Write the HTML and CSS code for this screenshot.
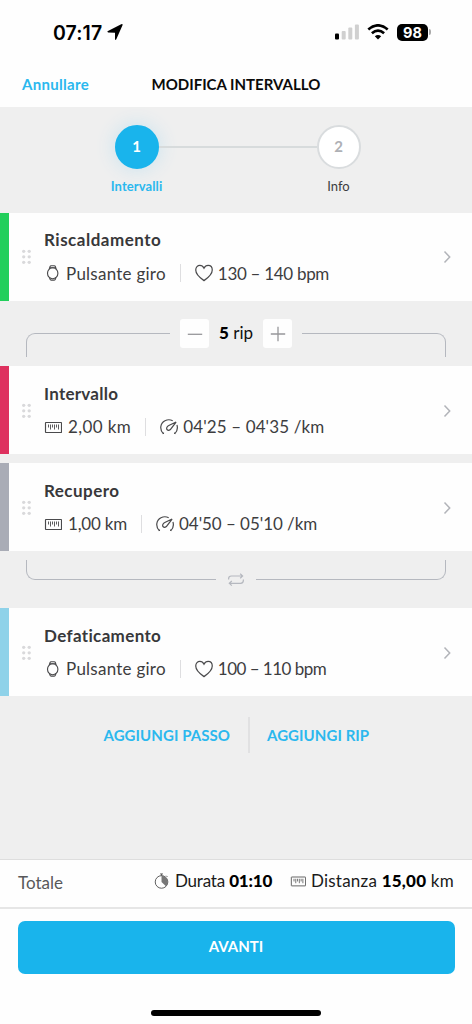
FILE: index.html
```html
<!DOCTYPE html>
<html lang="it">
<head>
<meta charset="utf-8">
<title>Modifica intervallo</title>
<link rel="stylesheet" href="styles.css">
</head>
<body>
<svg class="defs" width="0" height="0">
  <symbol id="watch" viewBox="0 0 18 18"><ellipse cx="8.700" cy="9.200" rx="5.200" ry="5.500"/><path d="M5.300 5 6 2.700Q6.300 1.700 7.200 1.700h3q.9 0 1.200 1l.7 2.300M6 3.700h5.400M5.500 13.600l.5 1.500q.3 1 1.200 1h3q.9 0 1.200-1l.5-1.500"/></symbol>
  <symbol id="heart" viewBox="0 0 17 17"><path d="M8.500 15.700C6 14 .7 10 .7 5.700.7 3 2.500 1.400 4.600 1.400c1.800 0 3.100 1 3.900 2.600.8-1.600 2.100-2.600 3.900-2.600 2.100 0 3.900 1.600 3.900 4.300 0 4.300-5.300 8.300-7.800 10z"/></symbol>
  <symbol id="ruler" viewBox="0 0 18 18"><rect x="1.500" y="4.500" width="16" height="10" rx=".4"/><path class="ticks" d="M4.500 6.500v3M6.500 6.500v5M8.500 6.500v3M10.500 6.500v5M12.500 6.500v3M14.500 6.500v5"/></symbol>
  <symbol id="gauge" viewBox="0 0 17 17"><path d="M3.200 15C-.8 10.800.3 4.800 4.700 2.600 7 1.400 9.700 1.400 12 2.600M16 6.600c.9 3 .3 6-2.100 8.400M15.200 3.800 8.300 7.100c-2 1-2.500 3-1.500 4s3 .5 3.900-1.400zM3.200 15l.1-1.400M13.900 15l-.1-1.400"/></symbol>
  <symbol id="timer" viewBox="0 0 17 17"><circle cx="8" cy="9.500" r="6.700"/><path d="M6.500 1h3M8 1v2M13 2.900l1.300 1.300"/><path class="solid" d="M8 2.800A6.700 6.700 0 0 1 12.700 14.200L8 9.500z"/></symbol>
  <symbol id="chevron" viewBox="0 0 8 14"><path d="M1.500 1.500 6.700 7 1.500 12.500"/></symbol>
  <symbol id="grip" viewBox="0 0 10 16"><circle cx="1.700" cy="2.300" r="1.650"/><circle cx="7.200" cy="2.300" r="1.650"/><circle cx="1.700" cy="7.800" r="1.650"/><circle cx="7.200" cy="7.800" r="1.650"/><circle cx="1.700" cy="13.300" r="1.650"/><circle cx="7.200" cy="13.300" r="1.650"/></symbol>
</svg>
<div class="screen">
  <div class="status">
    <span class="clock">07:17</span>
    <svg class="location" width="16" height="16" viewBox="0 0 16 16"><path d="M15.500 1.200 9.300 15.300q-.8 1.200-1.300-.1V8.800L1.200 8.400q-1.700-.5-.2-1.500L14.200.200q1.900-.5 1.300 1z"/></svg>
    <svg class="signal" width="24" height="16" viewBox="0 0 24 16"><rect x="0" y="9.500" width="4" height="6" rx="1" fill="#000"/><rect x="6.700" y="7" width="4" height="8.500" rx="1"/><rect x="13.300" y="3.500" width="4" height="12" rx="1"/><rect x="19.900" y=".5" width="4" height="15" rx="1"/></svg>
    <svg class="wifi" width="22" height="16" viewBox="0 0 22 16"><path d="M1.300 5.500Q11-2.800 20.700 5.500M4.900 9.300Q11 4 17.100 9.300" fill="none" stroke="#000" stroke-width="2.700"/><path d="M11 15.500 7.800 12.200Q11 9.700 14.200 12.200z"/></svg>
    <span class="battery">98</span><span class="battery-tip"></span>
  </div>
  <header class="nav">
    <a class="cancel">Annullare</a>
    <h1 class="heading">MODIFICA INTERVALLO</h1>
  </header>
  <section class="stepper">
    <div class="step active"><span class="bubble">1</span><span class="step-label">Intervalli</span></div>
    <span class="track"></span>
    <div class="step"><span class="bubble">2</span><span class="step-label">Info</span></div>
  </section>
  <main>
    <article class="card green">
      <svg class="grip"><use href="#grip"/></svg>
      <div class="body">
        <h2 class="title t-warm">Riscaldamento</h2>
        <div class="meta"><svg class="icon"><use href="#watch"/></svg><span class="lap">Pulsante giro</span><i class="sep"></i><svg class="icon"><use href="#heart"/></svg><span class="bpm">130 – 140 bpm</span></div>
      </div>
      <svg class="chevron"><use href="#chevron"/></svg>
    </article>
    <div class="repeat-top">
      <span class="bracket tl"></span>
      <button class="square"><svg width="16" height="16" viewBox="0 0 16 16"><path d="M.8 8.300h14.400"/></svg></button>
      <span class="count"><b>5</b> rip</span>
      <button class="square"><svg width="16" height="16" viewBox="0 0 16 16"><path d="M.8 8h14.400M8 .8v14.400"/></svg></button>
      <span class="bracket tr"></span>
    </div>
    <article class="card red">
      <svg class="grip"><use href="#grip"/></svg>
      <div class="body">
        <h2 class="title t-interval">Intervallo</h2>
        <div class="meta"><svg class="icon"><use href="#ruler"/></svg><span class="dist two">2,00 km</span><i class="sep"></i><svg class="icon"><use href="#gauge"/></svg><span class="pace">04'25 – 04'35 /km</span></div>
      </div>
      <svg class="chevron"><use href="#chevron"/></svg>
    </article>
    <article class="card gray">
      <svg class="grip"><use href="#grip"/></svg>
      <div class="body">
        <h2 class="title t-recover">Recupero</h2>
        <div class="meta"><svg class="icon"><use href="#ruler"/></svg><span class="dist one">1,00 km</span><i class="sep"></i><svg class="icon"><use href="#gauge"/></svg><span class="pace slow">04'50 – 05'10 /km</span></div>
      </div>
      <svg class="chevron"><use href="#chevron"/></svg>
    </article>
    <div class="repeat-bottom">
      <span class="bracket bl"></span>
      <svg class="loop" width="18" height="14" viewBox="0 0 18 14"><path d="M1.600 6.500V5.800Q1.600 3 4.400 3H15.500M13.200.8 15.600 3l-2.400 2.200M16.400 6.500v.8q0 3-2.800 3H2.400M4.800 8 2.300 10.300l2.500 2.300"/></svg>
      <span class="bracket br"></span>
    </div>
    <article class="card blue">
      <svg class="grip"><use href="#grip"/></svg>
      <div class="body">
        <h2 class="title t-cool">Defaticamento</h2>
        <div class="meta"><svg class="icon"><use href="#watch"/></svg><span class="lap">Pulsante giro</span><i class="sep"></i><svg class="icon"><use href="#heart"/></svg><span class="bpm low">100 – 110 bpm</span></div>
      </div>
      <svg class="chevron"><use href="#chevron"/></svg>
    </article>
    <div class="actions"><a class="add-step">AGGIUNGI PASSO</a><i class="divider"></i><a class="add-rep">AGGIUNGI RIP</a></div>
  </main>
  <section class="totals">
    <span class="total-label">Totale</span>
    <svg class="small-icon"><use href="#timer"/></svg><span class="duration">Durata <b>01:10</b></span>
    <svg class="small-icon"><use href="#ruler"/></svg><span class="distance">Distanza <b>15,00</b> km</span>
  </section>
  <footer class="footer"><button class="next">AVANTI</button><span class="home"></span></footer>
</div>
</body>
</html>
```

FILE: styles.css
```css
* { box-sizing: border-box; }
body { margin: 0; font-family: Lato, "Open Sans", sans-serif; font-size: 17px; font-variant-ligatures: none; color: #3d3d3f; background: #fefefe; }
h1, h2 { margin: 0; }
svg { display: block; flex: none; }
button { border: 0; padding: 0; font: inherit; }
span, a, h1, h2 { white-space: nowrap; }
.defs { position: absolute; }
.screen { width: 472px; height: 1024px; display: flex; flex-direction: column; background: #fefefe; overflow: hidden; }

.status { height: 62px; padding: 2px 0 0 53px; display: flex; align-items: center; flex: none; }
.clock { width: 50px; padding-top: 2px; font: 600 19.5px/24px Inter, sans-serif; letter-spacing: .1px; color: #000; }
.location { margin-left: 4px; }
.signal { margin-left: 212px; fill: #d0d0d0; }
.wifi { margin-left: 8px; }
.battery { width: 31px; height: 17px; margin-left: 8px; border-radius: 5px; background: #000; color: #fff; font: 700 14.5px/17px Inter, sans-serif; text-align: center; }
.battery-tip { width: 2px; height: 6px; margin-left: 1px; border-radius: 0 2px 2px 0; background: #aaa; }

.nav { height: 45px; flex: none; display: flex; align-items: center; padding: 0 0 1px 22px; }
.cancel { width: 129.5px; color: #2bb8ee; font-size: 15px; font-weight: 700; letter-spacing: .3px; }
.heading { color: #0b0b0b; font-size: 15px; font-weight: 700; letter-spacing: 0; }

.stepper { height: 105.5px; flex: none; display: flex; justify-content: center; padding: 18px 0 0 3px; background: #efefef; }
.step { width: 44px; display: flex; flex-direction: column; align-items: center; }
.bubble { width: 44px; height: 44px; border: 2px solid #d9dcde; border-radius: 50%; background: #fff; color: #aeb0b5; text-align: center; font: 700 15px/39px Lato, sans-serif; }
.step-label { margin-top: 8px; font-size: 13px; line-height: 18px; }
.active .bubble { border-color: #19b4ec; background: #19b4ec; color: #fff; box-shadow: 0 0 18px 2px #cfe5ef; }
.active .step-label { color: #2bb8ee; font-weight: 700; letter-spacing: .1px; }
.track { width: 158px; height: 2px; margin-top: 21px; background: #d7dbdc; }

main { flex: 1; background: #efefef; }
.card { height: 88px; display: flex; align-items: center; border-left: 9px solid; background: #fefefe; }
.green { border-color: #22cf5b; }
.red { border-color: #de315f; }
.gray { border-color: #a9acb6; margin-top: 9px; }
.blue { border-color: #8fd2e9; }
.grip { width: 10px; height: 16px; margin: 1px 0 0 13px; fill: #d9d9db; }
.body { flex: 1; height: 88px; padding: 15.5px 0 0 12px; }
.title { font-size: 17px; line-height: 24px; font-weight: 700; color: #38383a; }
.t-warm { letter-spacing: .5px; }
.t-interval { letter-spacing: .25px; }
.t-recover { letter-spacing: .45px; }
.t-cool { letter-spacing: .35px; }
.meta { display: flex; align-items: center; height: 24px; margin-top: 9px; }
.icon { width: 18px; height: 18px; margin-right: 5px; fill: none; stroke: #4a4a4c; stroke-width: 1.15; }
.ticks { stroke-width: .9; }
.solid { fill: #777; stroke: none; }
.lap { margin-left: -1px; letter-spacing: .25px; }
.bpm { letter-spacing: -.3px; }
.low { letter-spacing: -.52px; }
.dist { margin-left: 1px; }
.two { letter-spacing: .4px; }
.one { letter-spacing: -.2px; }
.pace { letter-spacing: .12px; }
.slow { letter-spacing: -.05px; }
.sep { width: 1px; height: 18px; margin: 0 14px; background: #dedee0; flex: none; }
.chevron { width: 8px; height: 14px; margin: 1px 21.5px 0 0; fill: none; stroke: #b2b4b9; stroke-width: 1.5; }

.repeat-top { height: 65.5px; padding: 18.5px 26px 0; display: flex; }
.bracket { height: 24px; border: 0 solid #b5b8bf; }
.tl, .tr { width: 144px; margin-top: 14px; border-top-width: 1.5px; }
.tl { border-left-width: 1.5px; border-top-left-radius: 9px; margin-right: 10px; }
.tr { border-right-width: 1.5px; border-top-right-radius: 9px; margin-left: 10px; }
.square { width: 29px; height: 29px; display: grid; place-items: center; border-radius: 3px; background: #fefefe; }
.square svg { fill: none; stroke: #97979a; stroke-width: 1.3; }
.count { width: 54px; text-align: center; line-height: 28px; color: #111; }
.count b { font-weight: 900; color: #000; }

.repeat-bottom { height: 57px; padding: 9px 26px 0; display: flex; }
.bl, .br { width: 190px; height: 20px; border-bottom-width: 1.5px; }
.bl { border-left-width: 1.5px; border-bottom-left-radius: 9px; }
.br { border-right-width: 1.5px; border-bottom-right-radius: 9px; }
.loop { margin: 13px 11px 0; fill: none; stroke: #b5b8bf; stroke-width: 1.2; }

.actions { display: flex; align-items: center; height: 36px; margin-top: 21px; padding-left: 103.5px; color: #2bb8ee; font-size: 15px; font-weight: 700; letter-spacing: .07px; }
.add-step { width: 144.5px; }
.divider { width: 2px; height: 36px; margin-right: 17px; background: #e1e1e2; }

.totals { height: 50px; flex: none; display: flex; align-items: center; padding-left: 18px; border-top: 1px solid #dedede; border-bottom: 2px solid #e6e6e6; color: #1a1a1a; }
.totals b { color: #000; font-weight: 900; }
.total-label { width: 136px; color: #58585a; padding-bottom: 3px; }
.small-icon { width: 16px; height: 16px; margin: 0 5px 5px 0; fill: none; stroke: #555; stroke-width: 1; }
.duration { width: 115px; margin-bottom: 7px; letter-spacing: -.2px; }
.distance { margin-bottom: 7px; letter-spacing: .22px; }

.footer { height: 115px; flex: none; padding: 12px 17px 0; display: flex; flex-direction: column; align-items: center; background: #fefefe; }
.next { width: 437px; height: 53px; padding-bottom: 3px; border-radius: 7px; background: #19b4ec; color: #fff; font-size: 15px; font-weight: 700; }
.home { width: 170px; height: 6px; margin-top: 36px; border-radius: 3px; background: #000; }
```
